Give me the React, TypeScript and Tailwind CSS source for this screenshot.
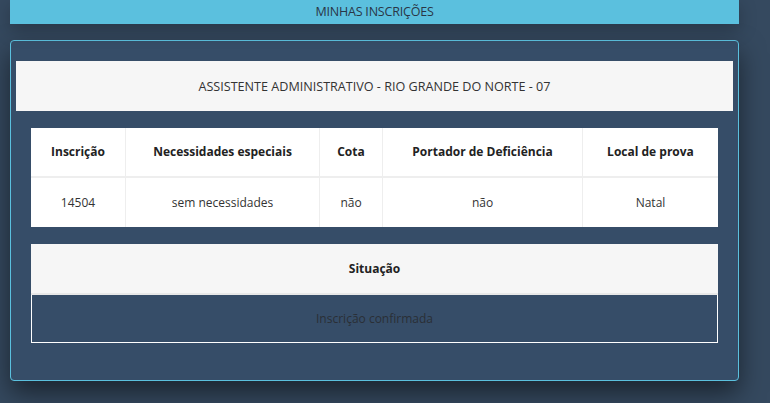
import React from "react";

const font = { fontFamily: '"Open Sans", "Noto Sans", sans-serif' };

export default function App() {
  const cols = [
    { h: "Inscrição", v: "14504", w: "w-[94px]" },
    { h: "Necessidades especiais", v: "sem necessidades", w: "w-[194px]" },
    { h: "Cota", v: "não", w: "w-[63px]" },
    { h: "Portador de Deficiência", v: "não", w: "w-[200px]" },
    { h: "Local de prova", v: "Natal", w: "w-[136px]" },
  ];
  return (
    <div
      className="w-[770px] h-[403px] overflow-hidden bg-[#35495f] text-[#333]"
      style={font}
    >
      <div className="ml-[10px] w-[729px]">
        <div className="relative z-10 h-[24px] bg-[#5bc0de] flex items-center justify-center text-[12.5px] tracking-[-0.2px] text-[#2a3646] shadow-[0_6px_18px_rgba(0,0,0,0.25)]">
          MINHAS INSCRIÇÕES
        </div>
        <div className="mt-[16px] h-[341px] rounded-[4px] border border-[#5bc0de] bg-[#364d68] px-[5px] pt-[20px] shadow-[0_12px_26px_rgba(0,0,0,0.5)]">
          <div className="h-[50px] bg-[#f6f6f6] flex items-center justify-center pt-[2px] text-[12.6px] text-[#333]">
            ASSISTENTE ADMINISTRATIVO - RIO GRANDE DO NORTE - 07
          </div>
          <div className="mx-[15px] mt-[17px] bg-white text-[12px]">
            <div className="flex h-[50px] border-b-2 border-[#eee]">
              {cols.map((c, i) => (
                <div
                  key={i}
                  className={`${c.w} flex items-center justify-center font-bold text-[#222] ${i > 0 ? "border-l border-[#eee]" : ""}`}
                >
                  {c.h}
                </div>
              ))}
            </div>
            <div className="flex h-[49px]">
              {cols.map((c, i) => (
                <div
                  key={i}
                  className={`${c.w} flex items-center justify-center text-[#333] ${i > 0 ? "border-l border-[#eee]" : ""}`}
                >
                  {c.v}
                </div>
              ))}
            </div>
          </div>
          <div className="mx-[15px] mt-[17px] text-[12px]">
            <div className="h-[51px] bg-[#f6f6f6] border-b-2 border-[#e8e8e8] flex items-center justify-center font-bold text-[#222]">
              Situação
            </div>
            <div className="h-[48px] border border-t-0 border-white flex items-center justify-center text-[#2a2f36]">
              Inscrição confirmada
            </div>
          </div>
        </div>
      </div>
    </div>
  );
}
